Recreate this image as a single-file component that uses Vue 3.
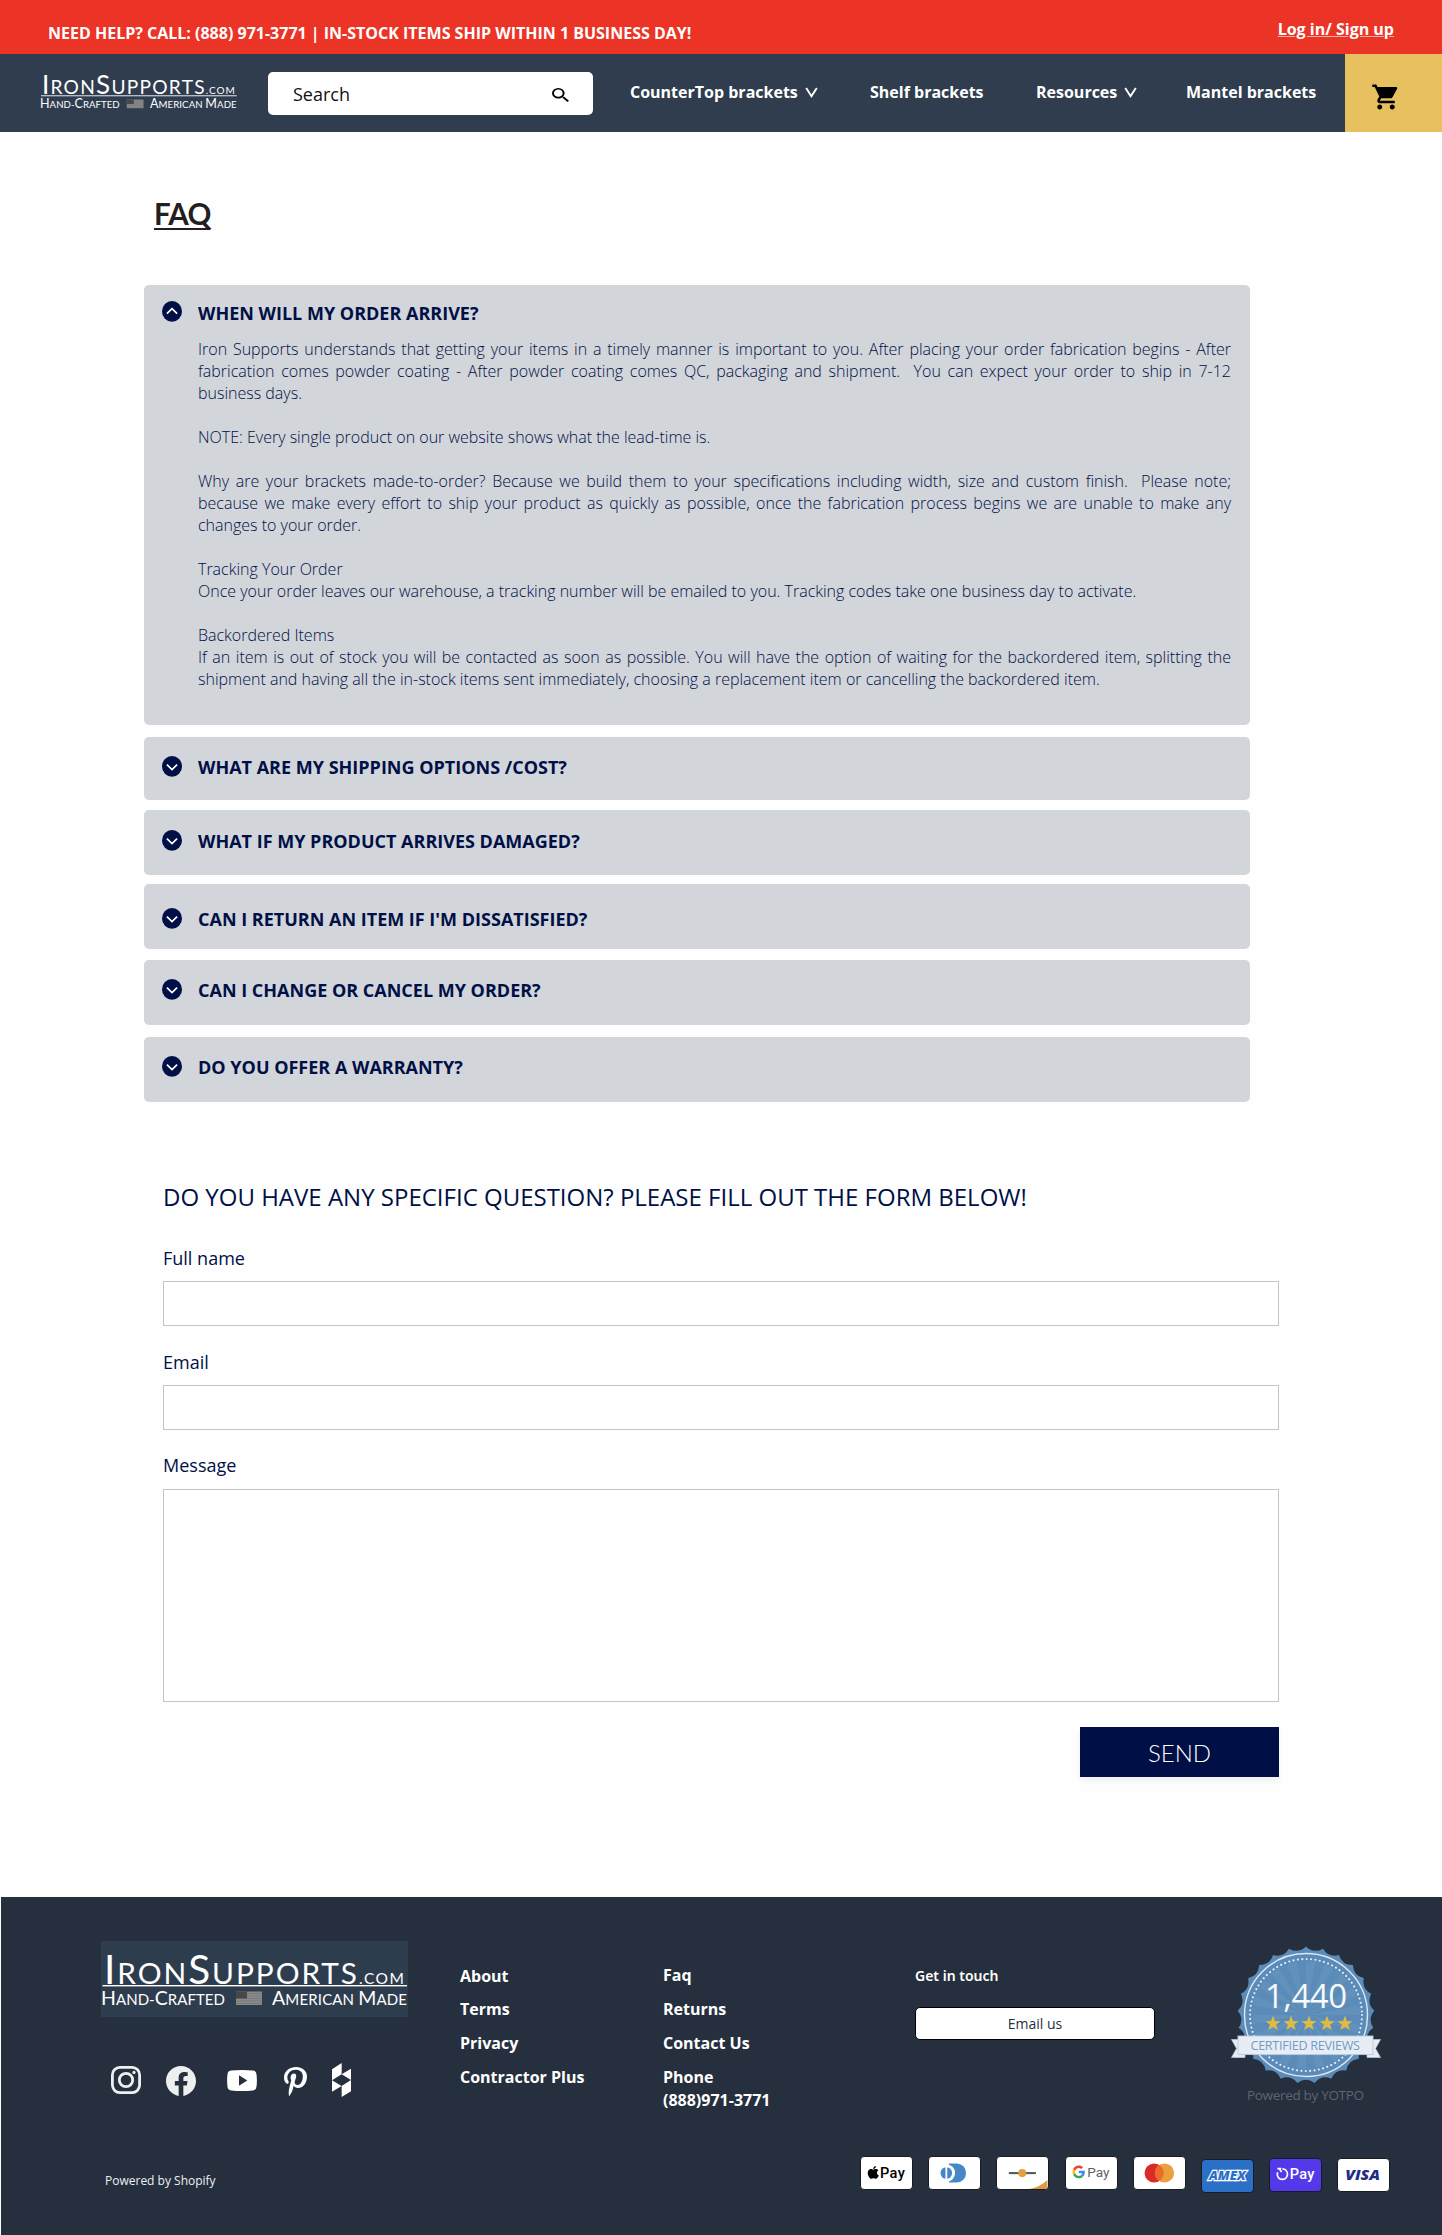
<script setup>
import { h } from 'vue'

const navLinks = [
  { label: 'CounterTop brackets', menu: true, cls: 'n1' },
  { label: 'Shelf brackets', menu: false, cls: 'n2' },
  { label: 'Resources', menu: true, cls: 'n3' },
  { label: 'Mantel brackets', menu: false, cls: 'n4' },
]

const arriveText = [
  'Iron Supports understands that getting your items in a timely manner is important to you. After placing your order fabrication begins - After fabrication comes powder coating - After powder coating comes QC, packaging and shipment.  You can expect your order to ship in 7-12 business days.',
  '',
  'NOTE: Every single product on our website shows what the lead-time is.',
  '',
  'Why are your brackets made-to-order? Because we build them to your specifications including width, size and custom finish.  Please note; because we make every effort to ship your product as quickly as possible, once the fabrication process begins we are unable to make any changes to your order.',
  '',
  'Tracking Your Order',
  'Once your order leaves our warehouse, a tracking number will be emailed to you. Tracking codes take one business day to activate.',
  '',
  'Backordered Items',
  'If an item is out of stock you will be contacted as soon as possible. You will have the option of waiting for the backordered item, splitting the shipment and having all the in-stock items sent immediately, choosing a replacement item or cancelling the backordered item.',
].join('\n')

const faqs = [
  { q: 'WHEN WILL MY ORDER ARRIVE?', a: arriveText },
  { q: 'WHAT ARE MY SHIPPING OPTIONS /COST?' },
  { q: 'WHAT IF MY PRODUCT ARRIVES DAMAGED?' },
  { q: "CAN I RETURN AN ITEM IF I'M DISSATISFIED?" },
  { q: 'CAN I CHANGE OR CANCEL MY ORDER?' },
  { q: 'DO YOU OFFER A WARRANTY?' },
]

// Wordmark shared by the header and the footer
const wordStyle = { fontFamily: 'Lato, "Open Sans", sans-serif', fill: '#fff' }
const big = (t, s) => h('tspan', { 'font-size': s }, t)
const Wordmark = () =>
  h('svg', { viewBox: '0 0 307 76', style: wordStyle }, [
    h('text', { x: 3, y: 42.5, textLength: 253 }, [big('I', 40.5), big('RON', 29.8), big('S', 40.5), big('UPPORTS', 29.8)]),
    h('text', { x: 258, y: 42.5, textLength: 45, 'font-size': 15.5 }, '.COM'),
    h('rect', { x: 1.5, y: 44, width: 304.5, height: 1.4, fill: '#fff' }),
    h('text', { x: 0, y: 64, textLength: 124 }, [big('H', 19.5), big('AND-', 15), big('C', 19.5), big('RAFTED', 15)]),
    h('rect', { x: 135, y: 50.5, width: 26, height: 13.5, fill: '#8b8b8b' }),
    h('path', { d: 'M135 52.5h26M135 55h26M135 57.5h26M135 60h26M135 62.5h26', stroke: '#747474', 'stroke-width': 0.8 }),
    h('rect', { x: 135, y: 50.5, width: 11, height: 7, fill: '#484848' }),
    h('text', { x: 171, y: 64, textLength: 135 }, [big('A', 19.5), big('MERICAN ', 15), big('M', 19.5), big('ADE', 15)]),
  ])

// Review seal geometry
const polar = (r, deg) => {
  const a = ((deg - 90) * Math.PI) / 180
  return `${(75 + r * Math.cos(a)).toFixed(2)} ${(70 + r * Math.sin(a)).toFixed(2)}`
}
const SPIKES = 25
const step = 360 / SPIKES
let seal = `M${polar(68.5, 0)}`
for (let i = 0; i < SPIKES; i++) seal += `Q${polar(61.5, (i + 0.5) * step)} ${polar(68.5, (i + 1) * step)}`
seal += 'Z'
let rays = ''
for (let i = 0; i < 18; i++) rays += `M75 70L${polar(54, i * 20)}L${polar(54, i * 20 + 10)}Z`
const star = (cx) => {
  const pts = []
  for (let i = 0; i < 10; i++) {
    const r = i % 2 ? 3.3 : 8
    const a = (i * 36 - 90) * Math.PI / 180
    pts.push(`${(cx + r * Math.cos(a)).toFixed(2)},${(78.6 + r * Math.sin(a)).toFixed(2)}`)
  }
  return pts.join(' ')
}
</script>

<template>
  <div class="page">
    <div class="topbar">
      <span class="help">NEED HELP? CALL: (888) 971-3771 | IN-STOCK ITEMS SHIP WITHIN 1 BUSINESS DAY!</span>
      <a class="login">Log in/ Sign up</a>
    </div>

    <header class="nav">
      <Wordmark class="logo" />
      <div class="search">
        <span>Search</span>
        <svg width="17" height="14" viewBox="3 3 17.5 17.5" preserveAspectRatio="none"><path d="M15.5 14h-.79l-.28-.27A6.471 6.471 0 0 0 16 9.5 6.5 6.5 0 1 0 9.5 16c1.61 0 3.09-.59 4.23-1.57l.27.28v.79l5 4.99L20.49 19l-4.99-5zm-6 0C7.01 14 5 11.99 5 9.5S7.01 5 9.5 5 14 7.01 14 9.5 11.99 14 9.5 14z" /></svg>
      </div>
      <nav class="links">
        <a v-for="l in navLinks" :key="l.label" :class="l.cls">
          {{ l.label }}
          <svg v-if="l.menu" width="13" height="11" viewBox="0 0 13 11"><path d="M1.2 1l5.3 8.2L11.8 1" fill="none" stroke="#fff" stroke-width="1.9" /></svg>
        </a>
      </nav>
      <div class="cart">
        <svg width="30" height="30" viewBox="0 0 24 24"><path d="M7 18c-1.1 0-1.99.9-1.99 2S5.9 22 7 22s2-.9 2-2-.9-2-2-2zM1 2v2h2l3.6 7.59-1.35 2.45c-.16.28-.25.61-.25.96 0 1.1.9 2 2 2h12v-2H7.42c-.14 0-.25-.11-.25-.25l.03-.12.9-1.63h7.45c.75 0 1.41-.41 1.75-1.03l3.58-6.49c.08-.14.12-.31.12-.48 0-.55-.45-1-1-1H5.21l-.94-2H1zm16 16c-1.1 0-1.99.9-1.99 2s.89 2 1.99 2 2-.9 2-2-.9-2-2-2z" /></svg>
      </div>
    </header>

    <main>
      <h1>FAQ</h1>

      <section class="faqs">
        <article v-for="(f, i) in faqs" :key="f.q" class="faq" :class="'f' + (i + 1)">
          <svg class="toggle" width="20" height="21" viewBox="0 0 20 21">
            <ellipse cx="10" cy="10.4" rx="10" ry="10.3" fill="#001046" />
            <path :d="f.a ? 'M4.9 12.6L10 7.6l5.1 5' : 'M4.9 8.6l5.1 5 5.1-5'" fill="none" stroke="#fff" stroke-width="1.7" />
          </svg>
          <div class="faq-text">
            <h2>{{ f.q }}</h2>
            <p v-if="f.a">{{ f.a }}</p>
          </div>
        </article>
      </section>

      <form class="contact" @submit.prevent>
        <h3>DO YOU HAVE ANY SPECIFIC QUESTION? PLEASE FILL OUT THE FORM BELOW!</h3>
        <label for="name">Full name</label>
        <input id="name" type="text" />
        <label for="email">Email</label>
        <input id="email" type="email" />
        <label for="message" class="msg">Message</label>
        <textarea id="message"></textarea>
        <button type="submit">SEND</button>
      </form>
    </main>

    <footer>
      <div class="brand">
        <Wordmark class="foot-logo" />
        <div class="social">
          <svg class="ig" width="30" height="28" viewBox="0 0 30 28" preserveAspectRatio="none" fill="none" stroke="#efefef">
            <rect x="1.4" y="1.4" width="27.2" height="25.2" rx="7.5" stroke-width="2.8" />
            <ellipse cx="15" cy="14" rx="6.7" ry="6.6" stroke-width="2.8" />
            <circle cx="23" cy="6.4" r="1.6" fill="#efefef" stroke="none" />
          </svg>
          <svg class="fb" width="30" height="30" viewBox="0 0 24 24"><path fill="#efefef" d="M24 12.073c0-6.627-5.373-12-12-12s-12 5.373-12 12c0 5.99 4.388 10.954 10.125 11.854v-8.385H7.078v-3.47h3.047V9.43c0-3.007 1.792-4.669 4.533-4.669 1.312 0 2.686.235 2.686.235v2.953H15.83c-1.491 0-1.956.925-1.956 1.874v2.25h3.328l-.532 3.47h-2.796v8.385C19.612 23.027 24 18.062 24 12.073z" /></svg>
          <svg class="yt" width="30" height="21" viewBox="0 0 30 21"><path fill="#fff" d="M4 .6Q15-.4 26 .6 29.2 1 29.5 4.2Q30.3 10.5 29.5 16.8 29.2 20 26 20.4 15 21.4 4 20.4 .8 20 .5 16.8-.3 10.5 .5 4.2 .8 1 4 .6zM12 5.2v10.6l8.3-5.3z" /></svg>
          <svg class="pin" width="23" height="29" viewBox="0 6 384 500" preserveAspectRatio="none"><path fill="#fff" d="M204 6.5C101.4 6.5 0 74.9 0 185.6 0 256 39.6 296 63.6 296c9.9 0 15.6-27.6 15.6-35.4 0-9.3-23.7-29.1-23.7-67.8 0-80.4 61.2-137.4 140.4-137.4 68.1 0 118.5 38.7 118.5 109.8 0 53.1-21.3 152.7-90.3 152.7-24.9 0-46.2-18-46.2-43.8 0-37.8 26.4-74.4 26.4-113.4 0-66.2-93.9-54.2-93.9 25.8 0 16.8 2.1 35.4 9.6 50.7-13.8 59.4-42 147.9-42 209.1 0 18.9 2.7 37.5 4.5 56.4 3.4 3.8 1.7 3.4 6.9 1.5 50.4-69 48.6-82.5 71.4-172.8 12.3 23.4 44.1 36 69.3 36 106.2 0 153.9-103.5 153.9-196.8C384 71.3 298.2 6.5 204 6.5z" /></svg>
          <svg class="houzz" width="19" height="34" viewBox="0 0 57 102"><path fill="#fff" d="M0 19L29 0V34L57 17V51L29 34 0 52zM0 52L29 69 57 51V85L29 102V69L0 86z" /></svg>
        </div>
        <span class="shopify">Powered by Shopify</span>
      </div>

      <ul class="col col1">
        <li>About</li>
        <li>Terms</li>
        <li>Privacy</li>
        <li>Contractor Plus</li>
      </ul>
      <ul class="col col2">
        <li>Faq</li>
        <li>Returns</li>
        <li>Contact Us</li>
        <li>Phone<br />(888)971-3771</li>
      </ul>

      <div class="right">
        <div class="right-top">
          <div class="touch">
            <span class="touch-title">Get in touch</span>
            <a class="email">Email us</a>
          </div>

          <svg class="seal" width="150" height="160" viewBox="0 0 150 160">
            <path :d="seal" fill="#5a8bb9" />
            <path :d="rays" fill="#7ba9c4" opacity=".25" />
            <circle cx="75" cy="70" r="61.5" fill="none" stroke="#dfe7f0" stroke-width="1.4" />
            <circle cx="75" cy="70" r="56" fill="none" stroke="#e6edf4" stroke-width="2.1" stroke-dasharray="0.01 4.392" stroke-linecap="round" />
            <text x="34" y="62.8" font-size="33" textLength="82" fill="#f7f9fb">1,440</text>
            <polygon v-for="n in 5" :key="n" :points="star(24 + n * 18)" fill="#ddbb45" />
            <path d="M.5 94.5H14V112.5H.5L5.5 103.5zM149.5 94.5H136V112.5H149.5L144.5 103.5z" fill="#e8edf5" stroke="#b9cce0" stroke-width=".7" />
            <rect x="7" y="91" width="135" height="18.6" fill="#e8edf5" stroke="#b5cade" stroke-width=".9" />
            <text x="19.5" y="104.8" font-size="12.6" textLength="109.5" fill="#6f9dc4">CERTIFIED REVIEWS</text>
            <text x="16" y="155" font-size="13.5" textLength="117" fill="#5f6570">Powered by YOTPO</text>
          </svg>
        </div>

        <div class="cards">
          <svg class="card" viewBox="0 0 53 34">
            <path transform="translate(5.2 9.5) scale(.6 .57)" d="M12.152 6.896c-.948 0-2.415-1.078-3.96-1.04-2.04.027-3.91 1.183-4.961 3.014-2.117 3.675-.546 9.103 1.519 12.09 1.013 1.454 2.208 3.09 3.792 3.039 1.52-.065 2.09-.987 3.935-.987 1.831 0 2.35.987 3.96.948 1.637-.026 2.676-1.48 3.676-2.948 1.156-1.688 1.636-3.325 1.662-3.415-.039-.013-3.182-1.221-3.22-4.857-.026-3.04 2.48-4.494 2.597-4.559-1.429-2.09-3.623-2.324-4.39-2.376-2-.156-3.675 1.09-4.61 1.09zM15.53 3.83c.843-1.012 1.4-2.427 1.245-3.83-1.207.052-2.662.805-3.532 1.818-.78.896-1.454 2.338-1.273 3.714 1.338.104 2.715-.688 3.56-1.702" />
            <text class="pay" x="19.5" y="22.2" font-size="15.5" textLength="26.5" font-weight="500">Pay</text>
          </svg>
          <svg class="card" viewBox="0 0 53 34">
            <path d="M20.5 7H28.8A10 10 0 0 1 28.8 27H20.5z" fill="#4787c6" />
            <circle cx="17.8" cy="17" r="9.3" fill="#fff" />
            <circle cx="17.8" cy="17" r="6.2" fill="#4787c6" />
            <rect x="16.9" y="10" width="1.9" height="14" fill="#fff" />
          </svg>
          <svg class="card" viewBox="0 0 53 34">
            <rect x="12" y="16" width="28.7" height="2.2" fill="#565656" />
            <circle cx="26.2" cy="17.1" r="4.3" fill="#e2a043" />
            <path d="M34 34Q45 32 53 24.5V34z" fill="#dd9c42" />
          </svg>
          <svg class="card" viewBox="0 0 53 34">
            <g transform="translate(6.3 9) scale(.279 .285)">
              <path fill="#4285f4" d="M46.98 24.55c0-1.57-.15-3.09-.38-4.55H24v9.02h12.94c-.58 2.96-2.26 5.48-4.78 7.18l7.73 6c4.51-4.18 7.09-10.36 7.09-17.65z" />
              <path fill="#34a853" d="M24 48c6.48 0 11.93-2.13 15.89-5.81l-7.73-6c-2.15 1.45-4.92 2.3-8.16 2.3-6.26 0-11.57-4.22-13.47-9.91l-7.98 6.19C6.51 42.62 14.62 48 24 48z" />
              <path fill="#fbbc05" d="M10.53 28.59c-.48-1.45-.76-2.99-.76-4.59s.27-3.14.76-4.59l-7.98-6.19C.92 16.46 0 20.12 0 24c0 3.88.92 7.54 2.56 10.78l7.97-6.19z" />
              <path fill="#ea4335" d="M24 9.5c3.54 0 6.71 1.22 9.21 3.6l6.85-6.85C35.9 2.38 30.47 0 24 0 14.62 0 6.51 5.38 2.56 13.22l7.98 6.19C12.43 13.72 17.74 9.5 24 9.5z" />
            </g>
            <text class="pay" x="22" y="21.5" font-size="14.5" textLength="23.5" fill="#5f6368">Pay</text>
          </svg>
          <svg class="card" viewBox="0 0 53 34">
            <circle cx="20.8" cy="17" r="10.2" fill="#d92b27" />
            <circle cx="31.8" cy="17" r="10.2" fill="#eaa03f" />
            <path d="M26.3 8.4a10.2 10.2 0 0 1 0 17.2a10.2 10.2 0 0 1 0-17.2z" fill="#ec6b2a" />
          </svg>
          <svg class="card amex" viewBox="0 0 53 34">
            <text class="brandmark" x="6.8" y="21.7" font-size="13.5" textLength="39" lengthAdjust="spacingAndGlyphs" fill="#2c6fc6" stroke="#fff" stroke-width="2.4" paint-order="stroke">AMEX</text>
          </svg>
          <svg class="card shop" viewBox="0 0 53 34">
            <path d="M7.2 10.2h4.2M9.2 10.4l2.6 3.4M12.6 10.4a5.2 5.6 0 0 1 .3 11.3 5.2 5.6 0 0 1-5.4-7.6" fill="none" stroke="#fff" stroke-width="1.8" />
            <text class="pay" x="20.5" y="21.5" font-size="15.5" textLength="26" font-weight="500" fill="#fff">Pay</text>
          </svg>
          <svg class="card visa" viewBox="0 0 53 34">
            <text class="brandmark" x="7" y="22.2" font-size="15" textLength="37" lengthAdjust="spacingAndGlyphs" fill="#1f2d86">VISA</text>
          </svg>
        </div>
      </div>
    </footer>
  </div>
</template>

<style>
body { margin: 0; background: #fff; }
</style>

<style scoped>
.page { width: 1442px; height: 2235px; display: flex; flex-direction: column; overflow: hidden; font-family: "Open Sans", "Noto Sans", sans-serif; background: #fefefe; }
svg { display: block; flex: none; }
h1, h2, h3, p, ul { margin: 0; padding: 0; }

.topbar { height: 54px; box-sizing: border-box; padding: 0 48px; display: flex; justify-content: space-between; background: #eb3426; color: #fff; font-size: 16px; font-weight: 700; line-height: 22px; }
.help { margin-top: 22px; white-space: nowrap; }
.login { margin-top: 18px; text-decoration: underline; text-decoration-color: rgba(255, 255, 255, .6); white-space: nowrap; }

.nav { height: 78px; display: flex; align-items: flex-start; background: #2f3d4e; }
.logo { width: 197.3px; height: 49px; margin: 13px 0 0 40px; }
.search { width: 325px; height: 43px; margin: 18px 0 0 30.7px; box-sizing: border-box; padding: 10px 24px 0 25px; border-radius: 5px; background: #fff; display: flex; justify-content: space-between; font-size: 18px; line-height: 24px; color: #111; }
.search svg { margin-top: 6px; }
.links { width: 752px; margin-top: 27px; display: grid; grid-template-columns: 240px 166px 150px 159px; padding-left: 37px; box-sizing: border-box; color: #fff; font-size: 16px; font-weight: 700; line-height: 22px; }
.links a { display: flex; gap: 7px; white-space: nowrap; }
.links svg { margin-top: 6px; }
.cart { width: 97px; height: 78px; background: #e7c15f; flex: none; }
.cart svg { margin: 28px 0 0 26px; }

main { height: 1765px; flex: none; box-sizing: border-box; padding: 64px 163px 0 144px; }
h1 { margin-left: 10px; font: 700 29.5px/36px Lato, sans-serif; letter-spacing: -.7px; color: #231f20; height: 89px; text-decoration: underline; text-decoration-thickness: 2px; text-underline-offset: 3px; text-decoration-skip-ink: none; }
.faqs { width: 1106px; }
.faq { box-sizing: border-box; display: flex; padding: 0 19px 0 18px; border-radius: 5px; background: #d2d5da; height: 65px; }
.faq-text { margin-left: 16px; width: 1033px; }
.toggle { margin-top: 1px; }
h2 { font-size: 18px; line-height: 24px; font-weight: 700; color: #001046; }
.faq p { margin-top: 13px; font-size: 16px; line-height: 22px; font-weight: 300; color: #001046; white-space: pre-wrap; text-align: justify; }
.f1 { height: 440px; padding-top: 16px; }
.f1 .toggle { margin-top: 0; }
.f2 { height: 63px; padding-top: 18px; margin-top: 12px; }
.f3 { padding-top: 19px; margin-top: 10px; }
.f4 { padding-top: 23px; margin-top: 9px; }
.f5 { padding-top: 18px; margin-top: 11px; }
.f6 { padding-top: 18px; margin-top: 12px; }

.contact { display: flex; flex-direction: column; width: 1116px; margin: 78px 0 0 19px; color: #001046; }
h3 { font-size: 24px; line-height: 34px; font-weight: 400; height: 66px; white-space: nowrap; }
label { font-size: 18px; line-height: 24px; height: 35px; }
input, textarea { box-sizing: border-box; width: 1116px; height: 45px; border: 1px solid #c4c5c7; border-radius: 0; background: #fff; margin: 0 0 24px; padding: 0; outline: none; resize: none; }
textarea { height: 213px; margin-bottom: 25px; }
.msg { height: 36px; margin-top: -1px; }
button { align-self: flex-end; width: 199px; height: 50px; border: 0; border-radius: 0; background: #001046; color: #fff; font: 300 24px/49px Lato, sans-serif; padding: 0; box-shadow: 0 4px 6px rgba(0, 16, 70, .06); }

footer { flex: 1; margin-left: 1px; display: flex; align-items: flex-start; background: #262f3e; color: #fff; }
.brand { width: 459px; flex: none; padding: 44px 0 0 100px; box-sizing: border-box; }
.foot-logo { width: 307px; height: 76px; background: #2e3d4e; }
.social { height: 34px; margin-top: 46px; padding-left: 10px; display: flex; align-items: flex-start; }
.ig { margin-top: 3px; }
.fb { margin: 3px 0 0 25px; }
.yt { margin: 7px 0 0 31px; }
.pin { margin: 4px 0 0 27px; }
.houzz { margin-left: 25px; }
.shopify { display: block; margin: 76px 0 0 4px; font-size: 12px; line-height: 16px; color: #eef0f2; }
.col { flex: none; list-style: none; font-size: 16px; font-weight: 700; line-height: 23px; padding-top: 67px; }
.col li { margin-bottom: 11px; white-space: nowrap; }
.col1 { width: 203px; }
.col1 li:first-child { margin: 1px 0 10px; }
.col2 { width: 252px; }
.right { width: 526px; flex: none; }
.right-top { display: flex; padding-top: 46px; height: 211px; }
.touch { width: 240px; margin-right: 76px; padding-top: 23px; box-sizing: border-box; display: flex; flex-direction: column; font-family: "Noto Sans", "Open Sans", sans-serif; font-size: 14px; }
.touch-title { font-weight: 600; line-height: 20px; }
.email { margin-top: 21px; box-sizing: border-box; height: 33px; border: 1px solid #000; border-radius: 5px; background: #fff; color: #262f3e; text-align: center; line-height: 32px; font-family: "Open Sans", sans-serif; }
.seal { margin-top: 2px; }
.cards { display: flex; gap: 15.2px; margin-left: -55px; margin-top: 2px; }
.card { width: 53px; height: 34px; border-radius: 4px; background: #fff; box-sizing: border-box; border: 1px solid #171b24; }
.amex { background: #2c6fc6; margin-top: 3px; }
.shop { background: #5439ea; margin-top: 2px; }
.visa { margin-top: 2px; }
.pay { font-family: Roboto, sans-serif; }
.brandmark { font-family: "Open Sans", sans-serif; font-weight: 800; font-style: italic; }
</style>
